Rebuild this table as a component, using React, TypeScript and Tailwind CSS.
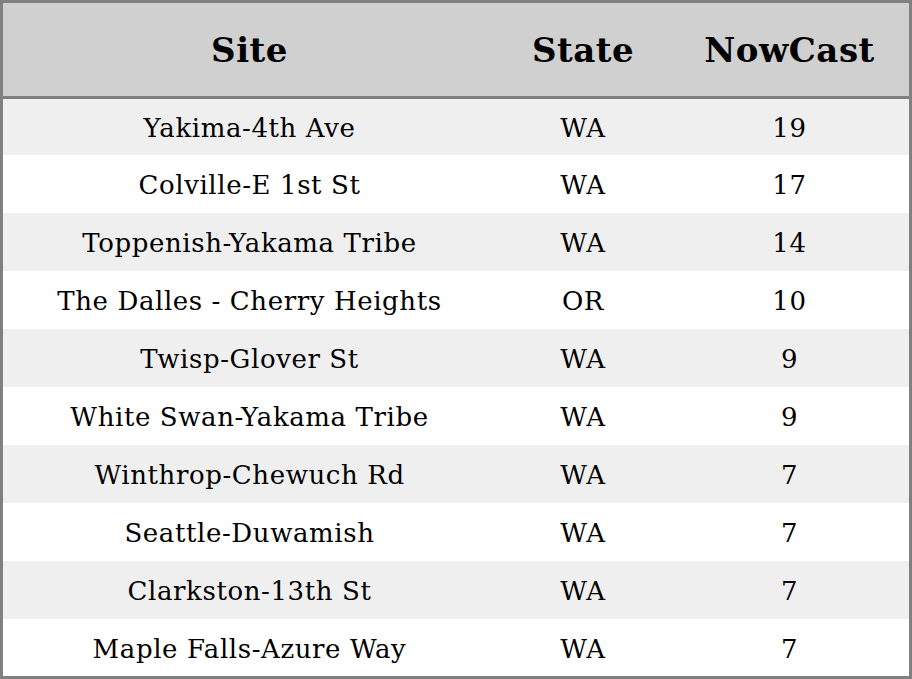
import React from "react";

const rows: [string, string, string][] = [
  ["Yakima-4th Ave", "WA", "19"],
  ["Colville-E 1st St", "WA", "17"],
  ["Toppenish-Yakama Tribe", "WA", "14"],
  ["The Dalles - Cherry Heights", "OR", "10"],
  ["Twisp-Glover St", "WA", "9"],
  ["White Swan-Yakama Tribe", "WA", "9"],
  ["Winthrop-Chewuch Rd", "WA", "7"],
  ["Seattle-Duwamish", "WA", "7"],
  ["Clarkston-13th St", "WA", "7"],
  ["Maple Falls-Azure Way", "WA", "7"],
];

export default function App() {
  return (
    <div
      className="w-[912px] h-[679px] border-[3px] border-[#808080] bg-white text-black flex flex-col"
      style={{ fontFamily: '"DejaVu Serif", serif' }}
    >
      <div className="h-[96px] pt-[2px] bg-[#d0d0d0] border-b-[3px] border-[#808080] grid grid-cols-[493px_174px_239px] items-center text-center font-bold text-[34px] tracking-[0.5px] shrink-0">
        <div>Site</div>
        <div>State</div>
        <div>NowCast</div>
      </div>
      <div className="flex flex-col flex-1">
        {rows.map((r, i) => (
          <div
            key={i}
            className={
              (i % 2 === 0 ? "bg-[#efefef] " : "bg-white ") +
              (i === 0 ? "h-[56px] " : i === 9 ? "h-[57px] " : "h-[58px] ") +
              "pt-[3px] grid grid-cols-[493px_174px_239px] items-center text-center text-[26px] tracking-[0.6px] shrink-0"
            }
          >
            <div>{r[0]}</div>
            <div>{r[1]}</div>
            <div>{r[2]}</div>
          </div>
        ))}
      </div>
    </div>
  );
}
